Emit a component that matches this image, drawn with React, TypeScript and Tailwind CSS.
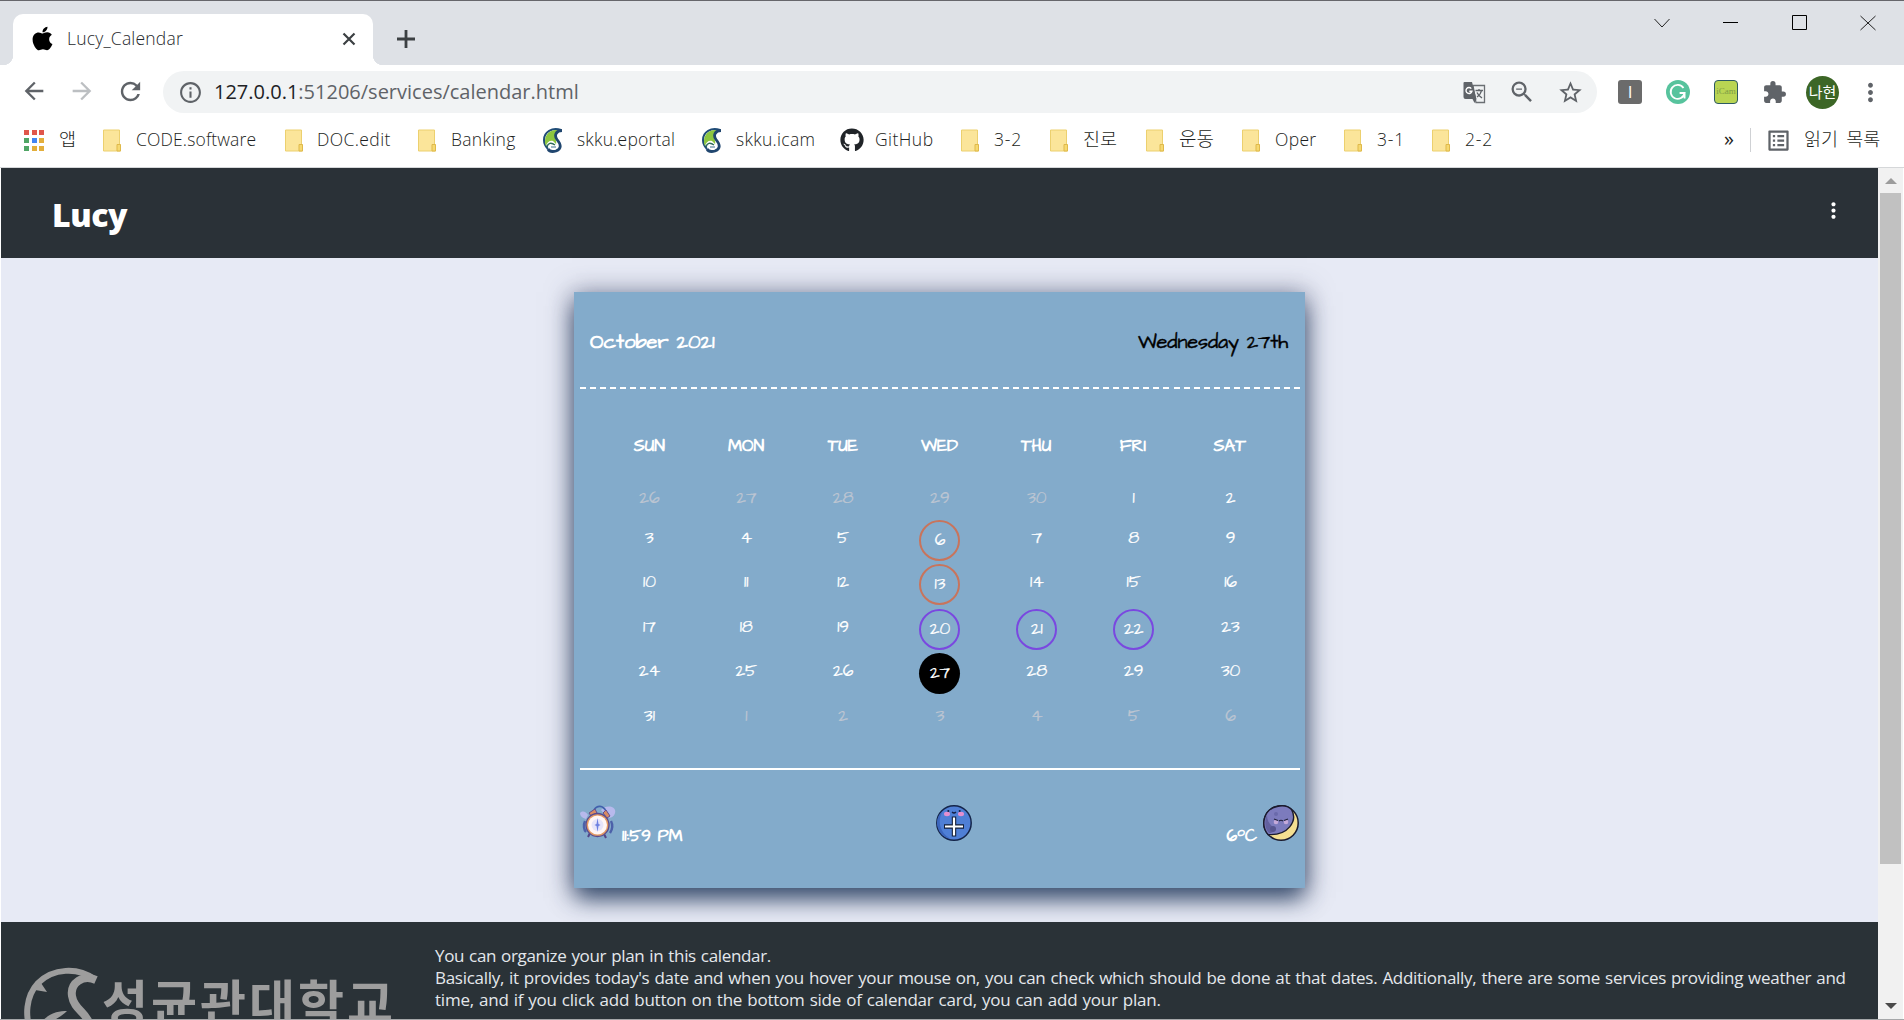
import React from "react";
import { FaApple, FaGithub } from "react-icons/fa";
import {
  MdArrowBack,
  MdArrowForward,
  MdRefresh,
  MdInfoOutline,
  MdZoomOut,
  MdStarBorder,
  MdExtension,
  MdMoreVert,
  MdOutlineListAlt,
} from "react-icons/md";

const Folder = () => (
  <svg width="18" height="23" viewBox="0 0 18 23">
    <path d="M.5 1h16v15h1v6H.5z" fill="#fbe59a" stroke="#ecd06f" />
    <path d="M14 22v-6.5h3.5V22z" fill="#f6d971" stroke="#dfb94b" />
  </svg>
);

const Skku = () => (
  <svg width="21" height="25" viewBox="0 0 21 25">
    <path d="M18 2C9-1 1 4 1 12c0 5 2 7 4 9" fill="none" stroke="#1f4c77" strokeWidth="2" />
    <path d="M17 2.500C8 0 2 6 2 13c0 2 0 3 1 5 1-4 4-6 7-5l3 3c1-2-1-4 0-8 1-3 3-4 4-5.500z" fill="#8cc63f" />
    <path d="M4 19c1-4 4-5 8-2" fill="none" stroke="#2d6a5a" strokeWidth="1.4" />
    <path d="M19 2.500c-6 0-8 5-5 9 4 5 5 9-1 11.500-4 1-7 0-8-2" fill="none" stroke="#20466f" strokeWidth="2.800" />
    <path d="M8 18h5v2H8z" fill="#9fb7c8" />
  </svg>
);

const Translate = () => (
  <svg width="23" height="23" viewBox="0 0 23 23">
    <path d="M10 4.500h11.500v17H13z" fill="#f1f3f4" stroke="#6b6f73" strokeWidth="1.300" />
    <path d="M1.500 1H9l4.500 17H2.500A2 2 0 0 1 .5 16V2a1 1 0 0 1 1-1z" fill="#5f6368" />
    <path d="M9.500 18h4l-2 4z" fill="#5f6368" />
    <path d="M8.300 7.600a3 3 0 1 0 .6 2.700H6.300" fill="none" stroke="#fff" strokeWidth="1.400" />
    <path d="M12.500 9.500h7.500M16 8v1.500M18.500 9.500c-.5 3-2.500 5-4.500 6.500M14 11.500c1 2.500 3 4 5 5.500" fill="none" stroke="#5f6368" strokeWidth="1.300" />
  </svg>
);

const Apps = () => {
  const colors = ["#e0564b", "#e0564b", "#e0564b", "#4fa565", "#4285f4", "#e3ae3b", "#4fa565", "#e3ae3b", "#e3ae3b"];
  return (
    <div className="grid w-[20px] grid-cols-3 gap-[3px]">
      {colors.map((c, i) => (
        <span key={i} className="h-[5px] w-[5px]" style={{ background: c }} />
      ))}
    </div>
  );
};

type Mark = { w: string; pad: string; text: string; track: string; icon: React.ReactNode };
const marks: Mark[] = [
  { w: "w-[79px]", pad: "w-[35px]", text: "앱", track: "text-[18.5px]", icon: <Apps /> },
  { w: "w-[182px]", pad: "w-[33px]", text: "CODE.software", track: "tracking-[0.15px]", icon: <Folder /> },
  { w: "w-[133px]", pad: "w-[32px]", text: "DOC.edit", track: "tracking-[0.4px]", icon: <Folder /> },
  { w: "w-[125px]", pad: "w-[33px]", text: "Banking", track: "tracking-[0.3px]", icon: <Folder /> },
  { w: "w-[159px]", pad: "w-[34px]", text: "skku.eportal", track: "tracking-[0.2px]", icon: <Skku /> },
  { w: "w-[138px]", pad: "w-[34px]", text: "skku.icam", track: "tracking-[0.3px]", icon: <Skku /> },
  { w: "w-[121px]", pad: "w-[35px]", text: "GitHub", track: "tracking-[0.45px]", icon: <FaGithub size={24} color="#202428" /> },
  { w: "w-[89px]", pad: "w-[33px]", text: "3-2", track: "tracking-[0.8px]", icon: <Folder /> },
  { w: "w-[96px]", pad: "w-[33px]", text: "진로", track: "text-[18.5px]", icon: <Folder /> },
  { w: "w-[96px]", pad: "w-[33px]", text: "운동", track: "text-[19px]", icon: <Folder /> },
  { w: "w-[102px]", pad: "w-[33px]", text: "Oper", track: "tracking-[0.3px]", icon: <Folder /> },
  { w: "w-[88px]", pad: "w-[33px]", text: "3-1", track: "tracking-[0.8px]", icon: <Folder /> },
  { w: "w-[70px]", pad: "w-[33px]", text: "2-2", track: "tracking-[0.8px]", icon: <Folder /> },
];

function TabStrip() {
  return (
    <div className="flex h-[65px] items-start border-t border-[#66666b] bg-[#dee1e6]">
      <div className="relative ml-[13px] mt-[13px] flex h-[51px] w-[360px] items-center rounded-t-[10px] bg-white pl-[16px] pr-[17px]">
        <span className="absolute -left-[10px] bottom-0 h-[10px] w-[10px] bg-[radial-gradient(circle_at_0_0,transparent_10px,#fff_10.5px)]" />
        <span className="absolute -right-[10px] bottom-0 h-[10px] w-[10px] bg-[radial-gradient(circle_at_100%_0,transparent_10px,#fff_10.5px)]" />
        <FaApple size={27} color="#000" className="-mt-[2px]" />
        <span className="-mt-[2px] ml-[11px] text-[17.5px] font-light tracking-[0.2px] text-[#26292c]">Lucy_Calendar</span>
        <svg width="14" height="14" viewBox="0 0 14 14" className="-mt-px ml-auto">
          <path d="M1.500 1.500l11 11M12.500 1.500l-11 11" stroke="#3c4043" strokeWidth="2.200" />
        </svg>
      </div>
      <svg width="18" height="18" viewBox="0 0 18 18" className="ml-[24px] mt-[29px]">
        <path d="M9 0v18M0 9h18" stroke="#3c4043" strokeWidth="2.800" />
      </svg>
      <div className="ml-auto mr-[28px] mt-[14px] flex items-center gap-[53px]">
        <svg width="16" height="16" viewBox="0 0 16 16"><path d="M.5 4l7.500 8 7.500-8" fill="none" stroke="#222" /></svg>
        <svg width="15" height="16" viewBox="0 0 15 16"><path d="M0 7.500h15" stroke="#000" /></svg>
        <svg width="16" height="16" viewBox="0 0 16 16"><path d="M1.500.5h14v14h-14z" fill="none" stroke="#000" /></svg>
        <svg width="16" height="16" viewBox="0 0 16 16"><path d="M.5 1l15 14M15.500 1L.5 15" fill="none" stroke="#222" /></svg>
      </div>
    </div>
  );
}

function Toolbar() {
  return (
    <div className="flex h-[54px] items-center bg-white pl-[20px] pr-[19px]">
      <MdArrowBack size={28} color="#5f6368" className="-mt-[2px]" />
      <MdArrowForward size={28} color="#bcbfc2" className="-mt-[2px] ml-[20px]" />
      <MdRefresh size={29} color="#5f6368" className="-mt-[2px] ml-[20px]" />
      <div className="ml-[18px] flex h-[42px] w-[1435px] items-center rounded-full bg-[#f1f3f4] pl-[15px] pr-[13px]">
        <MdInfoOutline size={25} color="#5f6368" />
        <span className="ml-[11px] text-[20px] text-[#5f6368]">
          <span className="text-[#202124]">127.0.0.1</span>:51206/services/calendar.html
        </span>
        <span className="ml-auto"><Translate /></span>
        <MdZoomOut size={28} color="#5f6368" className="ml-[22px]" />
        <MdStarBorder size={27} color="#5f6368" className="ml-[21px]" />
      </div>
      <div className="ml-[21px] flex h-6 w-6 items-center justify-center rounded-[3px] bg-[#6b6b6b] text-[17px] text-white">I</div>
      <svg width="24" height="24" viewBox="0 0 24 24" className="ml-6">
        <circle cx="12" cy="12" r="12" fill="#57c39d" />
        <path d="M17.500 8A7 7 0 1 0 18.600 13h-5M18.600 13v5.500" fill="none" stroke="#fff" strokeWidth="1.8" />
      </svg>
      <div className="ml-6 flex h-6 w-6 items-center justify-center rounded-[4px] border-[1.5px] border-[#2d5a63] bg-[#b9d553] font-['Liberation_Serif'] text-[9px] text-[#7c9c45]">iCam</div>
      <MdExtension size={25} color="#5f6368" className="ml-6" />
      <div className="ml-[19px] flex h-[33px] w-[33px] items-center justify-center rounded-full bg-[#3c6626] text-[15px] text-white">나현</div>
      <MdMoreVert size={29} color="#5f6368" className="ml-[17px]" />
    </div>
  );
}

function Bookmarks() {
  return (
    <div className="flex h-[49px] items-start border-b border-[#d5d7d9] bg-white pl-[24px] text-[17.5px] font-light text-[#1c1e21]">
      <div className="flex h-[42px] items-center">
        {marks.map((m, i) => (
          <div key={i} className={"flex shrink-0 items-center " + m.w}>
            <span className={"shrink-0 " + m.pad}>{m.icon}</span>
            <span className={"-mt-[2px] whitespace-nowrap " + m.track}>{m.text}</span>
          </div>
        ))}
      </div>
      <div className="ml-auto mr-[22px] flex h-[42px] items-center">
        <span className="-mt-[3px] text-[20px] font-normal">»</span>
        <span className="ml-[16px] h-6 w-px bg-[#cfd1d4]" />
        <MdOutlineListAlt size={27} color="#5f6368" className="ml-[14px]" />
        <span className="-mt-[2px] ml-[12px] w-[78px] whitespace-nowrap text-[18.5px] [word-spacing:3.5px]">읽기 목록</span>
      </div>
    </div>
  );
}

const days = ["SUN", "MON", "TUE", "WED", "THU", "FRI", "SAT"];
const weeks = [
  { y: "h-[40px]", d: [26, 27, 28, 29, 30, 1, 2] },
  { y: "h-[44px]", d: [3, 4, 5, 6, 7, 8, 9] },
  { y: "h-[45px]", d: [10, 11, 12, 13, 14, 15, 16] },
  { y: "h-[44px]", d: [17, 18, 19, 20, 21, 22, 23] },
  { y: "h-[45px]", d: [24, 25, 26, 27, 28, 29, 30] },
  { y: "h-[44px]", d: [31, 1, 2, 3, 4, 5, 6] },
];

function ring(w: number, n: number) {
  if (w === 4 && n === 27) return "bg-black";
  if (n === 6 && w === 1) return "border-2 border-[#c8745c]";
  if (n === 13) return "border-2 border-[#c8745c]";
  if (w === 3 && n >= 20 && n <= 22) return "border-2 border-[#7a48e0]";
  return "";
}

const Clock = () => (
  <svg width="37" height="34" viewBox="0 0 37 34" className="mb-[3px]">
    <path d="M21 5c5-6 16-4 14 3-1 4-4 5-8 5zM0 8c3-3 6-1 8 2l-2 4C2 13 0 11 0 8z" fill="#b7b9ec" />
    <path d="M14 5c3-5 9-5 12 1" fill="none" stroke="#4161ad" strokeWidth="1.6" />
    <path d="M5 16c-2 4-1 9 1 11M31 16c2 4 1 9-1 12" fill="none" stroke="#4c61a9" strokeWidth="2.4" />
    <path d="M9 8l6-4 2 4-6 3zM23 8l3-3 4 6-3 2z" fill="#d88b63" stroke="#634d8c" />
    <path d="M10 28l-2 4M24 29l2 4" stroke="#514488" strokeWidth="2" />
    <circle cx="17.500" cy="20" r="11.500" fill="#e39a63" stroke="#594b8f" strokeWidth="1.3" />
    <circle cx="17.500" cy="20" r="9.500" fill="#fff6f6" />
    <circle cx="17.500" cy="20" r="6" fill="#e6e4fa" />
    <path d="M17.500 13l1 6 2 1-2 1-1 6-1-6-2-1 2-1z" fill="#6d7fe0" />
  </svg>
);

const Plus = () => (
  <svg width="36" height="36" viewBox="0 0 36 36">
    <circle cx="18" cy="18" r="17.200" fill="#4f7fd6" stroke="#15254a" strokeWidth="1.5" />
    <path d="M7 6A15.500 15.500 0 0 0 14 33.500 19 19 0 0 1 7 6" fill="#3c66bd" />
    <ellipse cx="11" cy="9" rx="3" ry="2.200" fill="#e58fcf" />
    <ellipse cx="25" cy="9" rx="3" ry="2.200" fill="#e58fcf" />
    <circle cx="12.300" cy="6" r="1" fill="#152045" />
    <circle cx="23.700" cy="6" r="1" fill="#152045" />
    <path d="M16 7q2 2 4 0" fill="none" stroke="#152045" strokeWidth="1.2" />
    <path d="M8 21.500h20M18 11.500v20" stroke="#15203a" strokeWidth="4.400" />
    <path d="M9 21.500h18M18 12.500v18" stroke="#fff" strokeWidth="2.200" />
  </svg>
);

const Moon = () => (
  <svg width="36" height="36" viewBox="0 0 36 36" className="mb-px">
    <circle cx="18" cy="18" r="17.200" fill="#f5df91" stroke="#1b1b2e" strokeWidth="1.5" />
    <path d="M28.500 4.500C35 16 25 31 5 29.500-3 20 1 4 14 1.500 20 0 25 1 28.500 4.500z" fill="#7c7bbd" stroke="#1b1b2e" strokeWidth="1.4" />
    <path d="M4 10C1 17 2 24 6 28c4 0 5-2 7-4-5-3-9-7-9-14z" fill="#62609f" />
    <circle cx="10" cy="24" r="3" fill="#56558f" />
    <circle cx="13" cy="9" r="2" fill="#6a69ab" />
    <circle cx="13" cy="17" r="2.300" fill="#c4a9da" />
    <circle cx="23" cy="17" r="2.300" fill="#c4a9da" />
    <path d="M11 14l4 1.500M25 14l-4 1.500M16 16q2-1.500 4 0" fill="none" stroke="#22223d" strokeWidth="1.200" />
  </svg>
);

function CalendarCard() {
  return (
    <section className="mx-auto flex h-[596px] w-[731px] flex-col bg-[#83abcb] pl-[6px] pr-[5px] font-['Architects_Daughter','Lato',sans-serif] text-white shadow-[0_12px_22px_-2px_rgba(35,60,95,0.85),0_2px_24px_2px_rgba(60,65,100,0.5)]">
      <div className="flex h-[95px] items-end justify-between pb-[32px] pl-[10px] pr-[12px] text-[20px] leading-[26px]">
        <h2 className="font-bold">October 2021</h2>
        <h2 className="font-normal tracking-[-0.13px] text-black [-webkit-text-stroke:0.4px_#000]">Wednesday 27th</h2>
      </div>
      <div className="h-[2px] bg-[repeating-linear-gradient(90deg,#fff_0_6px,transparent_6px_10.060px)]" />
      <div className="ml-[21px] mt-[44px] grid w-[677px] grid-cols-7 text-center text-[17px] font-bold leading-[26px]">
        {days.map((d) => (
          <span key={d}>{d}</span>
        ))}
      </div>
      <div className="ml-[21px] mt-[19px] w-[678px]">
        {weeks.map((w, wi) => (
          <div key={wi} className={"grid grid-cols-7 justify-items-center text-[17px] " + w.y}>
            {w.d.map((n, i) => {
              const r = ring(wi, n);
              const dim = (wi === 0 && n > 20) || (wi === 5 && n < 20);
              return (
                <span
                  key={i}
                  className={
                    "flex h-[41px] w-[41px] items-center justify-center rounded-full " +
                    (r
                      ? "mt-[2px] [-webkit-text-stroke:0.2px_#fff] " + r
                      : dim
                        ? "text-[#bcc5d2] [-webkit-text-stroke:0.2px_#bcc5d2]"
                        : "[-webkit-text-stroke:0.2px_#fff]")
                  }
                >
                  {n}
                </span>
              );
            })}
          </div>
        ))}
      </div>
      <div className="mt-[28px] h-[2px] bg-white" />
      <div className="grid h-[72px] grid-cols-3 pt-[35px] text-[17px] font-bold leading-[20px]">
        <div className="flex items-end">
          <Clock />
          <span className="-mb-[4px] ml-[5px]">11:59 PM</span>
        </div>
        <div className="ml-[116px] flex"><Plus /></div>
        <div className="flex items-end justify-end pr-px">
          <span className="-mb-[4px] mr-[6px]">
            6<span className="relative -top-[5px] text-[14px] leading-none">o</span>C
          </span>
          <Moon />
        </div>
      </div>
    </section>
  );
}

function Footer() {
  return (
    <footer className="flex h-[97px] overflow-hidden bg-[#2a3237]">
      <div className="flex w-[434px] items-start pl-[23px] pt-[44px]">
        <svg width="76" height="76" viewBox="0 0 76 76" className="shrink-0">
          <g fill="none" stroke="#9d9d9d">
            <path d="M70 13C54 1 29 2 14 17 2 30 0 51 8 67" strokeWidth="6" />
            <path d="M72 14C59 8 46 17 48 30c2 14 16 17 18 30" strokeWidth="8" />
          </g>
          <path d="M17 17l6 9-12-2zM16 58c8-11 18-13 27-13-5 5-11 8-18 12z" fill="#9d9d9d" />
        </svg>
        <div className="ml-[2px] mt-[9px] whitespace-nowrap font-['Noto_Sans_CJK_KR',sans-serif] text-[50px] font-bold leading-[50px] tracking-[3px] text-[#9d9d9d]">성균관대학교</div>
      </div>
      <p className="whitespace-nowrap pt-[23px] text-[17px] leading-[22px] tracking-[-0.3px] text-[#e4e8ec] [word-spacing:0.9px]">
        <span className="tracking-[-0.34px]">You can organize your plan in this calendar.</span>
        <br />
        <span className="tracking-[-0.29px]">Basically, it provides today's date and when you hover your mouse on, you can check which should be done at that dates. Additionally, there are some services providing weather and</span>
        <br />
        <span className="tracking-[-0.23px]">time, and if you click add button on the bottom side of calendar card, you can add your plan.</span>
      </p>
    </footer>
  );
}

export default function App() {
  return (
    <div className="h-[1020px] w-[1904px] overflow-hidden border-b border-[#a5a7a9] bg-white font-['Open_Sans','Noto_Sans_CJK_KR',sans-serif]">
      <TabStrip />
      <Toolbar />
      <Bookmarks />
      <div className="flex h-[851px] pl-px">
        <div className="w-[1877px]">
          <header className="flex h-[90px] items-center justify-between bg-[#2a3137] pl-[51px] pr-[32px]">
            <h1 className="pt-[4px] text-[32px] font-extrabold tracking-[-0.4px] text-white">Lucy</h1>
            <MdMoreVert size={25} color="#fff" className="-mt-[5px]" />
          </header>
          <main className="h-[664px] bg-[#e7eaf5] pt-[34px]">
            <CalendarCard />
          </main>
          <Footer />
        </div>
        <div className="flex w-[25px] flex-col items-center bg-[#f1f1f1]">
          <svg width="12" height="25" viewBox="0 0 12 25"><path d="M0 16l6-6 6 6z" fill="#9c9c9c" /></svg>
          <div className="h-[671px] w-[21px] bg-[#c1c1c1]" />
          <svg width="12" height="8" viewBox="0 0 12 8" className="mb-[9px] mt-auto"><path d="M0 1l6 6 6-6z" fill="#4a4a4a" /></svg>
        </div>
      </div>
    </div>
  );
}
